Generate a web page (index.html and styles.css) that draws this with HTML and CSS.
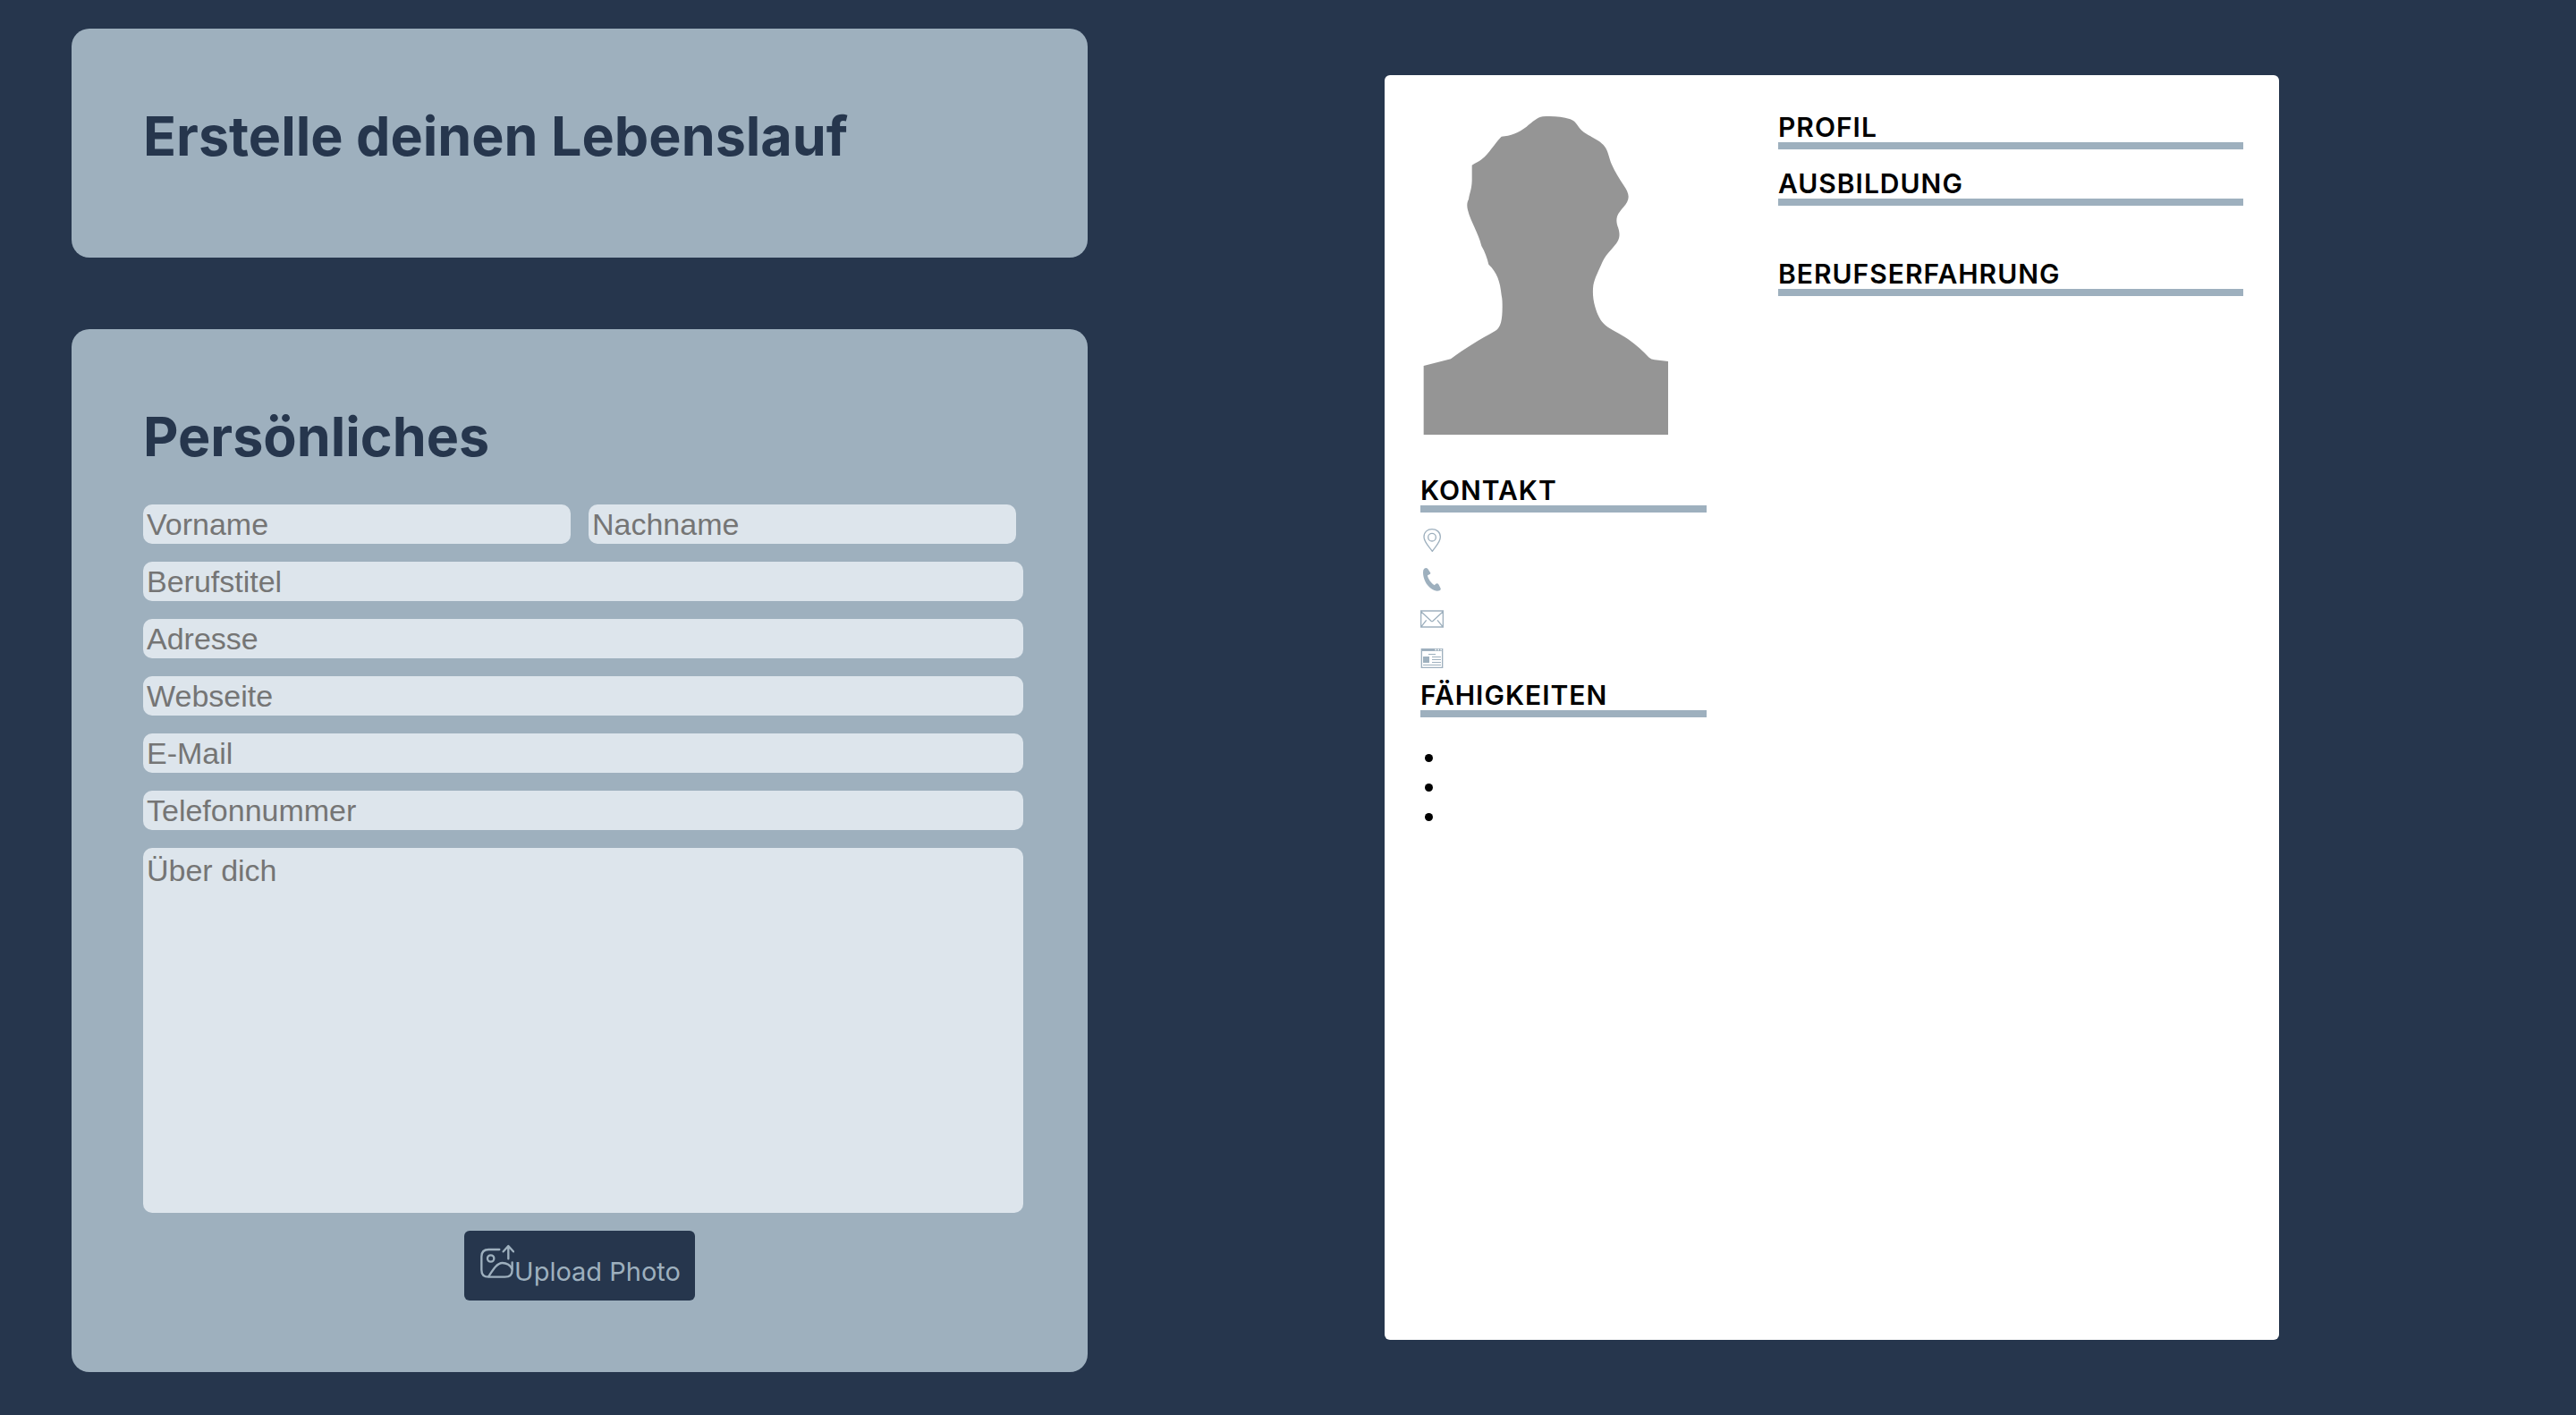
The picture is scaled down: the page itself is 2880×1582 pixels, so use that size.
FILE: index.html
```html
<!DOCTYPE html>
<html lang="de">
<head>
<meta charset="utf-8">
<meta name="viewport" content="width=device-width, initial-scale=1">
<title>Lebenslauf</title>
<link rel="stylesheet" href="styles.css">
</head>
<body>
<main class="page">
  <div class="editor">
    <header class="card">
      <h1 class="card-title">Erstelle deinen Lebenslauf</h1>
    </header>
    <form class="card">
      <h2 class="card-title">Persönliches</h2>
      <div class="fields">
        <div class="name-row">
          <input class="field" type="text" placeholder="Vorname" aria-label="Vorname">
          <input class="field" type="text" placeholder="Nachname" aria-label="Nachname">
        </div>
        <input class="field" type="text" placeholder="Berufstitel" aria-label="Berufstitel">
        <input class="field" type="text" placeholder="Adresse" aria-label="Adresse">
        <input class="field" type="text" placeholder="Webseite" aria-label="Webseite">
        <input class="field" type="email" placeholder="E-Mail" aria-label="E-Mail">
        <input class="field" type="tel" placeholder="Telefonnummer" aria-label="Telefonnummer">
        <textarea class="field about" placeholder="Über dich" aria-label="Über dich"></textarea>
        <button class="upload" type="button">
          <svg class="upload-icon" viewBox="99 150 120 120" aria-hidden="true">
            <path d="M169 171H133Q109 171 109 195V239Q109 263 133 263H187Q212 263 212 239V214"/>
            <circle cx="140" cy="201" r="11"/>
            <path d="M133 261C146 241 160 216 179 216C193 216 207 224 211 236"/>
            <path d="M199 202V160M182 178L199 159L216 178"/>
          </svg>
          <span class="upload-text">Upload Photo</span>
        </button>
      </div>
    </form>
  </div>

  <div class="preview">
    <article class="paper">
      <div class="side">
        <svg class="photo" viewBox="144 132 960 1128" role="img" aria-label="Foto">
          <path d="M155 987L246 964C292 928 345 898 396 869C414 860 419 831 419 790C419 775 419 764 416 750C412 705 401 673 373 647C368 625 360 604 349 585C337 538 312 502 303 464C299 448 301 437 306 428C309 408 316 396 317 366L317 314C328 306 339 303 350 294C375 274 393 241 416 218C446 216 474 205 500 185C520 169 537 153 554 151C590 149 617 151 647 160C670 168 668 186 693 204C715 220 745 229 762 251C774 266 777 292 786 312C796 336 810 357 827 383C834 394 842 406 842 420C842 446 812 462 804 486C800 500 803 512 807 523C812 537 814 553 807 567C794 591 770 606 754 640C743 667 729 691 724 717C721 740 723 766 730 789C737 814 748 838 765 851C785 867 812 878 840 897C868 916 890 938 911 959Q918 966 930 967L975 972V1218H155Z"/>
        </svg>
        <section class="contact">
          <h2 class="section-title">KONTAKT</h2>
          <ul class="contact-list">
            <li class="contact-item">
              <svg class="icon" viewBox="0 0 78 78" aria-hidden="true"><path class="line" d="M40 76C30 61 12 46 12 28C12 11 24 2 39 2S67 11 67 28C67 46 50 61 40 76Z"/><circle class="line" cx="39" cy="29" r="13"/></svg>
            </li>
            <li class="contact-item">
              <svg class="icon" viewBox="0 0 78 78" aria-hidden="true"><path class="solid" d="M13 2Q20-2 25 3L33 15Q36 20 30 22L24 25C25 36 37 52 47 58L52 53Q57 50 62 56L67 67Q70 71 66 75C57 80 47 77 37 70C19 57 9 35 9 15Q9 5 13 2Z"/></svg>
            </li>
            <li class="contact-item">
              <svg class="icon" viewBox="0 0 78 78" aria-hidden="true"><path class="line" d="M2 12H76V66H2ZM2 14L36 46Q39 48 42 46L76 14M3 65L20 43M75 65L57 43"/></svg>
            </li>
            <li class="contact-item">
              <svg class="icon" viewBox="0 0 78 78" aria-hidden="true"><path class="line" d="M4 8H74V70H4Z"/><path class="solid" d="M3 6H75V15H3ZM9 33H30V54H9Z"/><path class="thin" d="M27 25.500H51M39 34.500H69M39 43.500H69M39 52.500H69M9 61.500H69"/><path class="knockout" d="M49 10.500H54M58 10.500H63M67 10.500H72"/></svg>
            </li>
          </ul>
        </section>
        <section>
          <h2 class="section-title">FÄHIGKEITEN</h2>
          <ul class="skills">
            <li class="skill"></li>
            <li class="skill"></li>
            <li class="skill"></li>
          </ul>
        </section>
      </div>
      <div class="body">
        <section class="block">
          <h2 class="section-title">PROFIL</h2>
        </section>
        <section class="block education">
          <h2 class="section-title">AUSBILDUNG</h2>
        </section>
        <section class="block">
          <h2 class="section-title">BERUFSERFAHRUNG</h2>
        </section>
      </div>
    </article>
  </div>
</main>
</body>
</html>
```
FILE: styles.css
```css
:root {
  --navy: #26364d;
  --steel: #9eb0be;
  --mist: #dde5ec;
}

* {
  box-sizing: border-box;
}

body {
  margin: 0;
  background: var(--navy);
  font-family: Inter, "Liberation Sans", sans-serif;
}

h1, h2, ul {
  margin: 0;
  padding: 0;
}

ul {
  list-style: none;
}

.page {
  display: grid;
  grid-template-columns: 19fr 26fr;
  min-height: 100vh;
}

/* Form column */
.editor {
  display: flex;
  flex-direction: column;
  gap: 80px;
  padding: 32px 0 48px 80px;
}

.card {
  padding: 80px 72px 80px 80px;
  border-radius: 20px;
  background: var(--steel);
}

.card-title {
  margin-bottom: 16px;
  color: var(--navy);
  font-size: 61px;
  font-weight: 700;
  line-height: 80px;
}

.fields {
  display: flex;
  flex-direction: column;
  gap: 20px;
  padding-top: 20px;
}

.name-row {
  display: grid;
  grid-template-columns: 1fr 1fr;
  gap: 20px;
  padding-right: 8px;
}

.field {
  display: block;
  width: 100%;
  height: 44px;
  padding: 2px 4px;
  border: 0;
  border-radius: 10px;
  background: var(--mist);
  color: #000;
  font-family: "Liberation Sans", Arial, sans-serif;
  font-size: 34px;
  line-height: 40px;
}

.field::placeholder {
  color: #757575;
  opacity: 1;
}

.about {
  height: 408px;
  padding-top: 5px;
  resize: none;
}

.upload {
  display: flex;
  align-self: center;
  align-items: flex-end;
  margin-right: 8px;
  padding: 14px 16px;
  border: 0;
  border-radius: 6px;
  background: var(--navy);
  color: var(--steel);
  font-family: inherit;
  font-size: 29px;
  line-height: 36px;
}

.upload-icon {
  width: 40px;
  height: 40px;
  margin-bottom: 10px;
  fill: none;
  stroke: currentColor;
  stroke-width: 7;
  stroke-linecap: round;
  stroke-linejoin: round;
}

/* Resume sheet */
.preview {
  display: flex;
  align-items: center;
  justify-content: center;
}

.paper {
  display: grid;
  grid-template-columns: 8fr 13fr;
  gap: 80px;
  width: 100%;
  max-width: 1000px;
  aspect-ratio: 1000 / 1414;
  padding: 40px;
  border-radius: 6px;
  background: #fff;
}

.photo {
  display: block;
  width: 100%;
  margin-bottom: 30px;
  fill: #959595;
}

.section-title {
  padding-top: 2px;
  border-bottom: 8px solid var(--steel);
  color: #000;
  font-size: 30px;
  font-weight: 600;
  letter-spacing: 1px;
  line-height: 33px;
}

.contact-list {
  padding-top: 10px;
}

.contact-item {
  padding: 8px 0 10px;
}

.icon {
  display: block;
  width: 26px;
  height: 26px;
}

.line,
.thin,
.knockout {
  fill: none;
  stroke: var(--steel);
  stroke-width: 4;
}

.thin {
  stroke-width: 3;
}

.knockout {
  stroke: #fff;
}

.solid {
  fill: var(--steel);
}

.skills {
  padding: 29px 0 0 5px;
}

.skill {
  display: flex;
  align-items: center;
  height: 33px;
}

.skill::before {
  content: "";
  width: 9px;
  height: 9px;
  border-radius: 50%;
  background: #000;
}

.block {
  margin-bottom: 20px;
}

.education {
  margin-bottom: 58px;
}
```
